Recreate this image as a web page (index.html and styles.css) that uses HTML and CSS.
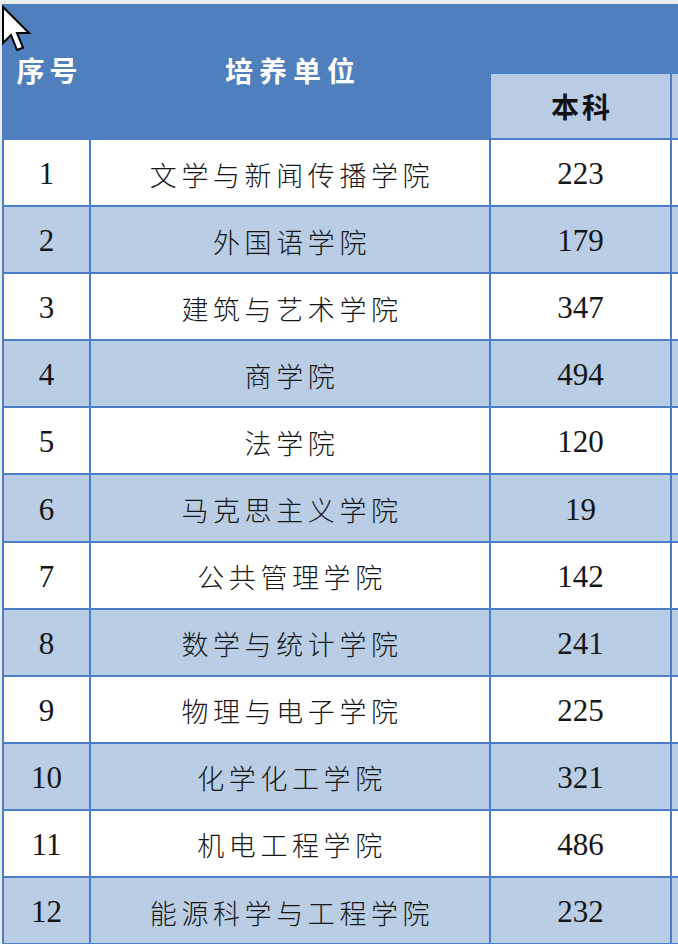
FILE: index.html
```html
<!DOCTYPE html>
<html lang="zh-CN">
<head>
<meta charset="utf-8">
<title>培养单位</title>
<link rel="stylesheet" href="styles.css">
</head>
<body>
<div class="page">
  <div class="sheet">
    <div class="head-main">
      <div class="hm-cell">序号</div>
      <div class="hm-cell hm-unit">培养单位</div>
    </div>
    <div class="head-top"></div>
    <div class="sub sub-bk">本科</div>
    <div class="sub"></div>

    <div class="c n">1</div><div class="c u">文学与新闻传播学院</div><div class="c v">223</div><div class="c"></div>
    <div class="c n alt">2</div><div class="c u alt">外国语学院</div><div class="c v alt">179</div><div class="c alt"></div>
    <div class="c n">3</div><div class="c u">建筑与艺术学院</div><div class="c v">347</div><div class="c"></div>
    <div class="c n alt">4</div><div class="c u alt">商学院</div><div class="c v alt">494</div><div class="c alt"></div>
    <div class="c n">5</div><div class="c u">法学院</div><div class="c v">120</div><div class="c"></div>
    <div class="c n alt">6</div><div class="c u alt">马克思主义学院</div><div class="c v alt">19</div><div class="c alt"></div>
    <div class="c n">7</div><div class="c u">公共管理学院</div><div class="c v">142</div><div class="c"></div>
    <div class="c n alt">8</div><div class="c u alt">数学与统计学院</div><div class="c v alt">241</div><div class="c alt"></div>
    <div class="c n">9</div><div class="c u">物理与电子学院</div><div class="c v">225</div><div class="c"></div>
    <div class="c n alt">10</div><div class="c u alt">化学化工学院</div><div class="c v alt">321</div><div class="c alt"></div>
    <div class="c n">11</div><div class="c u">机电工程学院</div><div class="c v">486</div><div class="c"></div>
    <div class="c n alt">12</div><div class="c u alt">能源科学与工程学院</div><div class="c v alt">232</div><div class="c alt"></div>
  </div>
  <svg class="cursor" width="34" height="50" viewBox="0 0 17 25" aria-hidden="true">
    <path d="M1 1 L1 19 L5 15 L8 22.5 L11 21.3 L8 14 L14 14 Z" fill="#ffffff" stroke="#000000" stroke-width="1" stroke-linejoin="miter"/>
  </svg>
</div>
</body>
</html>
```

FILE: styles.css
```css
html, body {
  margin: 0;
  padding: 0;
  background: #e9ebef;
}

.page {
  position: relative;
  width: 678px;
  height: 944px;
  overflow: hidden;
  background: #e9ebef;
}

.sheet {
  display: grid;
  grid-template-columns: 85px 398px 179px 120px;
  grid-template-rows: 68px 64px repeat(12, 65.1px);
  gap: 2px;
  background: #4a7ec6;
  padding: 0 0 2px 2px;
  margin: 4px 0 0 2px;
  width: max-content;
}

.head-main {
  grid-column: 1 / 3;
  grid-row: 1 / 3;
  background: #4f80bd;
  display: grid;
  grid-template-columns: 87px 398px;
  align-items: center;
}

.hm-cell {
  color: #ffffff;
  font-family: "Noto Sans CJK SC", "Noto Sans", sans-serif;
  font-weight: 700;
  font-size: 28px;
  letter-spacing: 5px;
  text-align: center;
  padding-left: 4px;
  padding-bottom: 2px;
}

.hm-unit {
  letter-spacing: 6px;
  padding-left: 6px;
}

.head-top {
  grid-column: 3 / 5;
  grid-row: 1;
  background: #4f80bd;
}

.sub {
  background: #b9cce4;
}

.sub-bk {
  display: flex;
  align-items: center;
  justify-content: center;
  font-family: "Noto Sans CJK SC", "Noto Sans", sans-serif;
  font-weight: 700;
  font-size: 28px;
  letter-spacing: 3px;
  padding-left: 3px;
  color: #111111;
}

.c {
  background: #ffffff;
  display: flex;
  align-items: center;
  justify-content: center;
  color: #161616;
  padding-top: 3px;
}

.c.alt {
  background: #b9cde5;
}

.n, .v {
  font-family: "Liberation Serif", "Times New Roman", serif;
  font-size: 31px;
}

.u {
  font-family: "Noto Sans CJK SC", "Noto Sans", sans-serif;
  font-weight: 300;
  font-size: 27px;
  letter-spacing: 4.6px;
  padding-left: 4px;
}

.cursor {
  position: absolute;
  left: 1px;
  top: 5px;
}
```
